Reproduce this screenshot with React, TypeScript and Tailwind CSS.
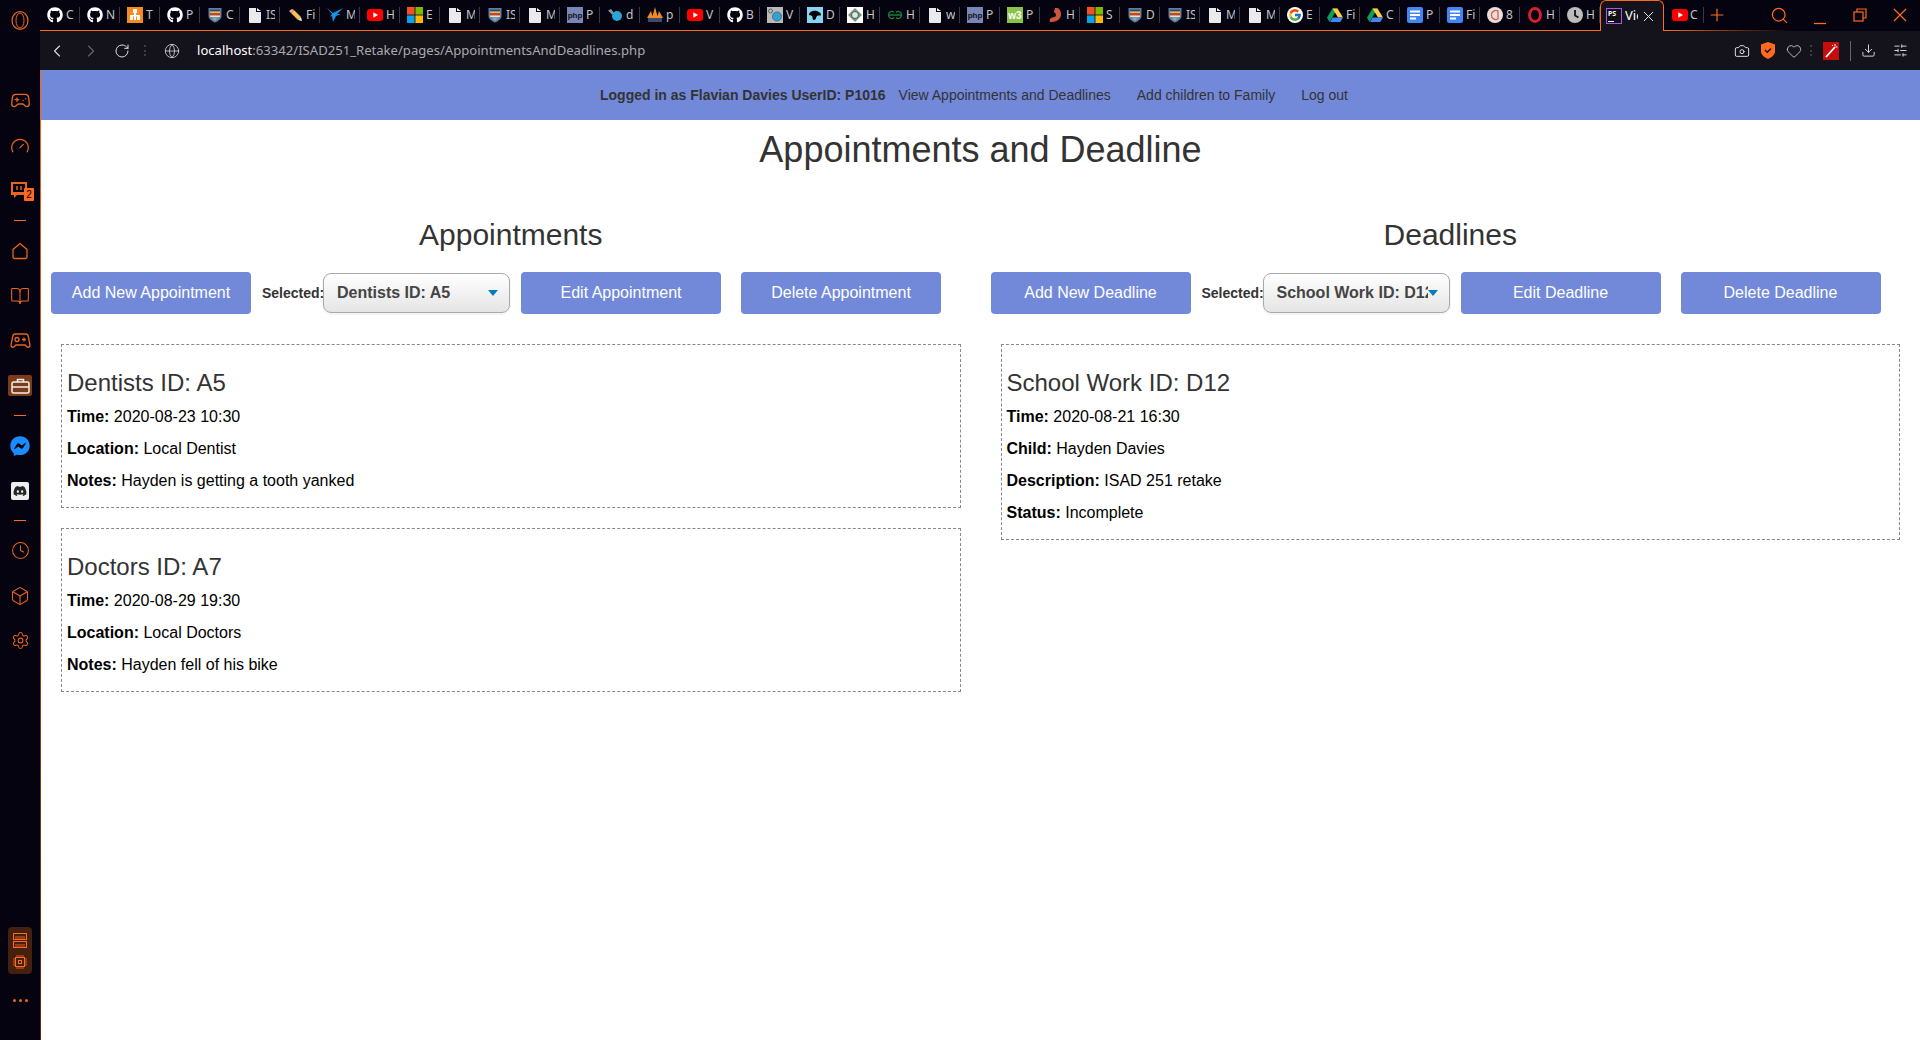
import type { ReactNode } from "react";
import {
  Box,
  BookOpen,
  Camera,
  ChevronLeft,
  ChevronRight,
  Clock,
  Download,
  Gamepad2,
  Gauge,
  Globe,
  Heart,
  Plus,
  RotateCw,
  Search,
  Settings,
  SlidersHorizontal,
  X,
} from "lucide-react";
import { FaDiscord, FaFacebookMessenger, FaGithub } from "react-icons/fa";
import { FcGoogle } from "react-icons/fc";

const Youtube = () => (
  <svg width="16" height="16" viewBox="0 0 16 16">
    <rect x="0" y="2" width="16" height="12" rx="3" fill="#f00" />
    <path d="M6.3 5.3 11 8l-4.7 2.7z" fill="#fff" />
  </svg>
);
const Microsoft = () => (
  <svg width="16" height="16" viewBox="0 0 16 16">
    <rect width="7.6" height="7.6" fill="#f25022" />
    <rect x="8.4" width="7.6" height="7.6" fill="#7fba00" />
    <rect y="8.4" width="7.6" height="7.6" fill="#00a4ef" />
    <rect x="8.4" y="8.4" width="7.6" height="7.6" fill="#ffb900" />
  </svg>
);
const Doc = () => (
  <svg width="16" height="16" viewBox="0 0 16 16">
    <path d="M2 1h7v4h5v10a1 1 0 0 1-1 1H3a1 1 0 0 1-1-1zM10 1l4 3h-4z" fill="#e8eaed" />
  </svg>
);
const Crest = () => (
  <svg width="16" height="16" viewBox="0 0 16 16">
    <path d="M1.500 1h13v8c0 3-3 5-6.500 6.500C4.500 14 1.500 12 1.500 9z" fill="#5f7fa6" />
    <rect x="3" y="2.500" width="10" height="2" fill="#2f4a75" />
    <rect x="3" y="4.500" width="10" height="1.500" fill="#e8c04a" />
    <rect x="3" y="6" width="10" height="2.500" fill="#c8402f" />
    <rect x="3" y="8.500" width="10" height="1.500" fill="#f1e3b0" />
    <path d="M4.500 10.500h7L8 14z" fill="#8ea5c2" />
  </svg>
);
const Php = () => (
  <svg width="16" height="16" viewBox="0 0 16 16">
    <rect width="16" height="16" fill="#7a86b8" />
    <text x="8" y="11" textAnchor="middle" fontSize="8" fontWeight="700" fill="#111" fontFamily="Liberation Sans">
      php
    </text>
  </svg>
);
const GDrive = () => (
  <svg width="16" height="16" viewBox="0 0 16 16">
    <path d="M5.500 1.500h5L5 11 2.500 15 0 10.500z" fill="#0f9d58" />
    <path d="M5.500 1.500h5l5.500 9h-5z" fill="#ffcd40" />
    <path d="M3 15l2.600-4.500H16L13.300 15z" fill="#4285f4" />
  </svg>
);
const GDocs = () => (
  <svg width="16" height="16" viewBox="0 0 16 16">
    <rect width="16" height="16" rx="2" fill="#4285f4" />
    <rect x="3" y="3.500" width="10" height="2" fill="#fff" />
    <rect x="3" y="7" width="10" height="2" fill="#fff" />
    <rect x="3" y="10.500" width="6" height="2" fill="#fff" />
  </svg>
);

const favicons: Record<string, ReactNode> = {
  github: <FaGithub size={16} color="#fff" />,
  tree: (
    <svg width="16" height="16" viewBox="0 0 16 16">
      <rect width="16" height="16" fill="#f58a1f" />
      <path d="M6 2h4v4H9v2h4v5h-3V9.500H9V13H7V9.500H6V13H3V8h4V6H6z" fill="#fff" />
    </svg>
  ),
  crest: <Crest />,
  doc: <Doc />,
  pencil: (
    <svg width="16" height="16" viewBox="0 0 16 16">
      <path d="M4 6l3-3 7 7-3 3z" fill="#f2c14e" />
      <path d="M4 6l3-3-2-1-3 2z" fill="#f2a6b0" />
      <path d="M11 13l3-3 1 4z" fill="#eee" />
    </svg>
  ),
  bird: (
    <svg width="16" height="16" viewBox="0 0 16 16">
      <path d="M0 1l6 5 10-5-6 6h4l-5 2-3 6-1-6-2 1 2-3z" fill="#1793e6" />
    </svg>
  ),
  youtube: <Youtube />,
  microsoft: <Microsoft />,
  php: <Php />,
  dot: (
    <svg width="16" height="16" viewBox="0 0 16 16">
      <circle cx="10" cy="9" r="5" fill="#2aa5d8" />
      <path d="M1 3.500l3-1.500 3 4-2 1.500z" fill="#7f98a3" />
    </svg>
  ),
  pascal: (
    <svg width="16" height="16" viewBox="0 0 16 16">
      <path d="M0 11 4 4l2 7zM5 11 8 0l3 11zM10 11l2-7 4 7z" fill="#f08a24" />
      <rect x="1" y="11" width="14" height="4" fill="#3d4a70" />
    </svg>
  ),
  lens: (
    <svg width="16" height="16" viewBox="0 0 16 16">
      <rect width="16" height="16" fill="#b9b9b9" />
      <circle cx="10" cy="9.500" r="4.500" fill="#2aa5d8" stroke="#567" />
      <circle cx="3.500" cy="4" r="2" fill="none" stroke="#567" />
    </svg>
  ),
  blob: (
    <svg width="16" height="16" viewBox="0 0 16 16">
      <rect width="16" height="16" fill="#87d3f2" />
      <path d="M2 7c1-3 5-4 8-3s4 3 4 4-3 0-4 1-1 4-3 4-1-3-2-4-3 0-3-2z" fill="#000" />
    </svg>
  ),
  diamond: (
    <svg width="16" height="16" viewBox="0 0 16 16">
      <rect width="16" height="16" fill="#fff" />
      <path d="M8 1l7 7-7 7-7-7z" fill="#7d8f84" />
      <circle cx="8" cy="8" r="3.500" fill="#dfe8e2" stroke="#2d6a4f" />
    </svg>
  ),
  gfg: (
    <svg width="16" height="16" viewBox="0 0 16 16">
      <path d="M8 8H1.500a3.200 3.200 0 0 1 5.500-2.500M8 8h6.500A3.200 3.200 0 0 0 9 5.500M1.500 8a3.200 3.200 0 0 0 5.500 2.500M14.500 8A3.200 3.200 0 0 1 9 10.500" fill="none" stroke="#1b7d3c" strokeWidth="1.300" />
    </svg>
  ),
  w3: (
    <svg width="16" height="16" viewBox="0 0 16 16">
      <rect width="16" height="16" fill="#8bc34a" />
      <text x="8" y="11.500" textAnchor="middle" fontSize="10" fontWeight="700" fill="#fff" fontFamily="Liberation Sans">
        w3
      </text>
    </svg>
  ),
  stomach: (
    <svg width="16" height="16" viewBox="0 0 16 16">
      <path d="M8 1h3c3 2 4 7 2 10s-6 4.500-10 4c-1-2 0-4 2-4.500s4-.5 4-2.500-2-2-2-3.500S8 2.500 8 1z" fill="#c9573f" />
    </svg>
  ),
  google: (
    <span className="flex h-4 w-4 items-center justify-center rounded-full bg-white">
      <FcGoogle size={14} />
    </span>
  ),
  drive: <GDrive />,
  docs: <GDocs />,
  circle: (
    <svg width="16" height="16" viewBox="0 0 16 16">
      <circle cx="8" cy="8" r="8" fill="#e6e0dc" />
      <path d="M11 12a4.500 4.500 0 1 1 0-8v8" fill="none" stroke="#e2574c" strokeWidth="1.300" />
    </svg>
  ),
  opera: (
    <svg width="16" height="16" viewBox="0 0 16 16">
      <ellipse cx="8" cy="8" rx="5.500" ry="6.500" fill="none" stroke="#d3202f" strokeWidth="3" />
    </svg>
  ),
  clock: (
    <svg width="16" height="16" viewBox="0 0 16 16">
      <circle cx="8" cy="8" r="8" fill="#bdbdbd" />
      <path d="M8 3v5.500l3.500 2" fill="none" stroke="#111" strokeWidth="1.800" />
    </svg>
  ),
};

const tabs: [string, string][] = [
  ["github", "C"], ["github", "N"], ["tree", "T"], ["github", "P"], ["crest", "C"],
  ["doc", "IS"], ["pencil", "Fi"], ["bird", "M"], ["youtube", "H"], ["microsoft", "E"],
  ["doc", "M"], ["crest", "IS"], ["doc", "M"], ["php", "P"], ["dot", "d"],
  ["pascal", "p"], ["youtube", "V"], ["github", "B"], ["lens", "V"], ["blob", "D"],
  ["diamond", "H"], ["gfg", "H"], ["doc", "w"], ["php", "P"], ["w3", "P"],
  ["stomach", "H"], ["microsoft", "S"], ["crest", "D"], ["crest", "IS"], ["doc", "M"],
  ["doc", "M"], ["google", "E"], ["drive", "Fi"], ["drive", "C"], ["docs", "P"],
  ["docs", "Fi"], ["circle", "8"], ["opera", "H"], ["clock", "H"],
];

function Tab({ icon, label }: { icon: string; label: string }) {
  return (
    <div className="flex h-[30px] w-10 shrink-0 items-center pl-[7px]">
      <span className="flex h-4 w-4 shrink-0 items-center justify-center">{favicons[icon]}</span>
      <span className="ml-[3px] w-[9px] overflow-hidden text-[12px] text-[#c4c4c4]">{label}</span>
      <span className="ml-auto h-4 w-px shrink-0 bg-[#3a3a42]" />
    </div>
  );
}

function TabStrip() {
  return (
    <div className="flex h-[31px] shrink-0">
      <div className="flex border-b border-[#ff6a1f]">
        {tabs.map(([icon, label], i) => (
          <Tab key={i} icon={icon} label={label} />
        ))}
      </div>
      <div className="flex h-[31px] w-16 shrink-0 items-center rounded-t-[6px] border-x border-t border-[#ff6a1f] bg-[#14131c] pl-[5px]">
        <span className="flex h-4 w-4 shrink-0 flex-col justify-between border border-[#a855f7] bg-[#111] px-px py-px">
          <span className="text-[7px] leading-[7px] font-bold text-white">PS</span>
          <span className="h-px w-[6px] bg-white" />
        </span>
        <span className="ml-[3px] w-[13px] overflow-hidden text-[13px] text-white">Vie</span>
        <X size={17} color="#e8e8e8" className="ml-[2px]" strokeWidth={1.4} />
      </div>
      <div className="flex flex-1 flex-col">
        <div className="flex h-[30px] items-center">
          <div className="flex h-[30px] w-10 items-center pl-2">
            <Youtube />
            <span className="ml-[2px] w-[8px] overflow-hidden text-[12px] text-[#c4c4c4]">C</span>
            <span className="ml-auto h-4 w-px bg-[#3a3a42]" />
          </div>
          <Plus size={20} color="#ff6a1f" className="ml-[3px]" strokeWidth={1.4} />
          <Search size={19} color="#ff6a1f" className="ml-[43px]" strokeWidth={1.5} />
          <svg width="14" height="14" viewBox="0 0 14 14" className="ml-[24px] mt-[5px]" fill="none" stroke="#ff6a1f" strokeWidth="1.300">
            <path d="M1 12.500h12" />
          </svg>
          <svg width="14" height="14" viewBox="0 0 14 14" className="ml-[26px]" fill="none" stroke="#ff6a1f" strokeWidth="1.200">
            <rect x="1" y="4" width="9" height="9" />
            <path d="M4 4V1h9v9h-3" />
          </svg>
          <svg width="14" height="14" viewBox="0 0 14 14" className="ml-[26px]" fill="none" stroke="#ff6a1f" strokeWidth="1.200">
            <path d="M1 1l12 12M13 1 1 13" />
          </svg>
        </div>
        <div className="h-px bg-gradient-to-r from-[#ff6a1f] to-transparent to-50%" />
      </div>
    </div>
  );
}

function DotsV() {
  return (
    <span className="flex h-[11px] w-[2px] shrink-0 flex-col justify-between">
      <span className="h-[2px] w-[2px] bg-[#3c3c44]" />
      <span className="h-[2px] w-[2px] bg-[#3c3c44]" />
      <span className="h-[2px] w-[2px] bg-[#3c3c44]" />
    </span>
  );
}

function Toolbar() {
  return (
    <div className="flex h-[39px] shrink-0 items-center bg-[#14131c] text-[#ddd]">
      <ChevronLeft size={20} strokeWidth={1.3} className="ml-[7px]" />
      <ChevronRight size={20} strokeWidth={1.3} className="ml-[14px] text-[#666]" />
      <RotateCw size={16} strokeWidth={1.5} className="ml-[13px]" />
      <span className="ml-[14px]">
        <DotsV />
      </span>
      <Globe size={16} strokeWidth={1.2} className="ml-[18px]" />
      <div className="ml-[17px] font-['Noto_Sans',sans-serif] text-[13.1px] whitespace-nowrap text-[#a9a9ae]">
        <span className="text-white">localhost</span>:63342/ISAD251_Retake/pages/AppointmentsAndDeadlines.php
      </div>
      <div className="ml-auto flex items-center pr-[12px]">
        <Camera size={16} strokeWidth={1.5} />
        <svg width="14" height="17" viewBox="0 0 14 17" className="ml-[11px]">
          <path d="M7 0l7 2.500v7c0 3-3 6-7 7.500-4-1.500-7-4.500-7-7.500v-7z" fill="#ff6a1f" />
          <path d="M4 8l2.300 2.300L10 6.500" fill="none" stroke="#14131c" strokeWidth="1.500" />
        </svg>
        <Heart size={16} strokeWidth={1.2} className="ml-[11px]" />
        <span className="ml-[8px]">
          <DotsV />
        </span>
        <svg width="16" height="18" viewBox="0 0 16 18" className="ml-[11px]">
          <rect width="16" height="18" fill="#c40d0d" />
          <path d="M3 15 12 5" stroke="#fff" strokeWidth="1.800" />
          <path d="M12 2v2M14.500 5h-2M9 3l1 1" stroke="#fff" strokeWidth="1" />
        </svg>
        <span className="ml-[11px] h-5 w-px bg-[#666]" />
        <Download size={15} strokeWidth={1.5} className="ml-[10px]" />
        <SlidersHorizontal size={15} strokeWidth={1.5} className="ml-[17px]" />
      </div>
    </div>
  );
}

function SideIcon({ children }: { children: ReactNode }) {
  return <div className="flex h-[45px] shrink-0 items-center justify-center text-[#e8641f]">{children}</div>;
}

function SideDivider() {
  return (
    <div className="flex h-[15px] shrink-0 items-center justify-center">
      <span className="h-px w-3 bg-[#ff6a1f]" />
    </div>
  );
}

function Sidebar() {
  return (
    <aside className="flex h-full w-10 shrink-0 flex-col bg-[#05030f]">
      <div className="flex h-[78px] shrink-0 justify-center pt-[11px]">
        <svg width="18" height="19" viewBox="0 0 18 19">
          <ellipse cx="9" cy="9.500" rx="8" ry="8.800" fill="none" stroke="#e8641f" strokeWidth="1.200" />
          <ellipse cx="9" cy="9.500" rx="4" ry="7.500" fill="none" stroke="#e8641f" strokeWidth="1" />
        </svg>
      </div>
      <SideIcon>
        <Gamepad2 size={21} strokeWidth={1.5} />
      </SideIcon>
      <SideIcon>
        <Gauge size={20} strokeWidth={1.5} />
      </SideIcon>
      <SideIcon>
        <div className="relative h-5 w-5">
          <svg width="18" height="18" viewBox="0 0 18 18">
            <path d="M1 1h16v10l-3 3H7l-3 3v-3H1z" fill="#e8641f" />
            <rect x="3" y="3" width="12" height="8" fill="#05030f" />
            <path d="M7 5v4M11 5v4" stroke="#e8641f" strokeWidth="1.500" />
          </svg>
          <span className="absolute top-[7px] left-[14px] flex h-[13px] w-[10px] items-center justify-center rounded-[1px] bg-[#ff6a1f] font-['Liberation_Sans',sans-serif] text-[10px] text-black">2</span>
        </div>
      </SideIcon>
      <SideDivider />
      <SideIcon>
        <svg width="18" height="18" viewBox="0 0 18 18" fill="none" stroke="#e8641f" strokeWidth="1.300">
          <path d="M9 1.500 16 7.500V15a1.500 1.500 0 0 1-1.500 1.500h-11A1.500 1.500 0 0 1 2 15V7.500z" strokeLinejoin="round" />
        </svg>
      </SideIcon>
      <SideIcon>
        <BookOpen size={20} strokeWidth={1.3} />
      </SideIcon>
      <SideIcon>
        <svg width="21" height="16" viewBox="0 0 21 16" fill="none" stroke="#e8641f" strokeWidth="1.300">
          <path d="M5 1h11c1.500 0 2 1 2.300 2.500L20 12c.3 2-2 3-3.300 1.500L15 12H6l-1.700 1.500C3 15 .7 14 1 12l1.700-8.500C3 2 3.500 1 5 1z" />
          <circle cx="7" cy="6.500" r="2" />
          <path d="M12 6.500h4M14 4.500v4" />
        </svg>
      </SideIcon>
      <SideIcon>
        <div className="flex h-[21px] w-6 items-center justify-center rounded-[2px] bg-[#7a3a1c] text-white">
          <svg width="19" height="16" viewBox="0 0 19 16" fill="none" stroke="#f5efe9" strokeWidth="1.500">
            <rect x="1" y="4" width="17" height="11" rx="1.500" />
            <path d="M6.500 4V1.500h6V4M1 9h17" />
          </svg>
        </div>
      </SideIcon>
      <SideDivider />
      <SideIcon>
        <FaFacebookMessenger size={20} color="#1a8cff" />
      </SideIcon>
      <SideIcon>
        <div className="flex h-[18px] w-[18px] items-center justify-center rounded-[2px] bg-[#eee]">
          <FaDiscord size={14} color="#23272a" />
        </div>
      </SideIcon>
      <SideDivider />
      <SideIcon>
        <Clock size={19} strokeWidth={1.3} />
      </SideIcon>
      <SideIcon>
        <Box size={20} strokeWidth={1.3} />
      </SideIcon>
      <SideIcon>
        <Settings size={19} strokeWidth={1.3} />
      </SideIcon>
      <div className="mt-auto flex flex-col items-center">
        <div className="flex h-[47px] w-6 flex-col items-center justify-center gap-[7px] rounded-[4px] bg-[#45200f]">
          <svg width="14" height="15" viewBox="0 0 14 15" fill="none" stroke="#ff6a1f">
            <rect x=".5" y=".5" width="13" height="6" />
            <rect x=".5" y="8.500" width="13" height="6" />
            <path d="M3 3v3M5 3v3M7 3v3M9 3v3M11 3v3M3 11v3M5 11v3M7 11v3M9 11v3M11 11v3" strokeWidth=".8" />
          </svg>
          <svg width="14" height="14" viewBox="0 0 14 14" fill="none" stroke="#ff6a1f">
            <rect x="2.500" y="2.500" width="9" height="9" />
            <rect x="5.500" y="5.500" width="3" height="3" />
            <path d="M4 0v2M6 0v2M8 0v2M10 0v2M4 12v2M6 12v2M8 12v2M10 12v2M0 4h2M0 6h2M0 8h2M0 10h2M12 4h2M12 6h2M12 8h2M12 10h2" strokeWidth=".8" />
          </svg>
        </div>
        <div className="mt-[25px] mb-[38px] flex gap-[3px]">
          <span className="h-[3px] w-[3px] rounded-full bg-[#e8641f]" />
          <span className="h-[3px] w-[3px] rounded-full bg-[#e8641f]" />
          <span className="h-[3px] w-[3px] rounded-full bg-[#e8641f]" />
        </div>
      </div>
    </aside>
  );
}

function ActionButton({ label, className }: { label: string; className: string }) {
  return (
    <button className={`h-[42px] w-[200px] shrink-0 rounded-[4px] bg-[#7289da] text-[16px] text-white ${className}`}>
      {label}
    </button>
  );
}

function FakeSelect({ value }: { value: string }) {
  return (
    <div className="flex h-10 w-[187px] shrink-0 items-center rounded-lg border border-[#aaa] bg-gradient-to-b from-white to-[#e5e5e5] pl-[13px] shadow-[0_1px_0_1px_rgba(0,0,0,0.04)]">
      <span className="w-[151px] shrink-0 overflow-hidden text-[16px] font-bold whitespace-nowrap text-[#444]">{value}</span>
      <span className="h-0 w-0 border-x-[5px] border-t-[6px] border-x-transparent border-t-[#007eb9]" />
    </div>
  );
}

function Field({ name, value }: { name: string; value: string }) {
  return (
    <p className="mb-[10px] text-[16px] leading-[22px] text-black">
      <b>{name}:</b> {value}
    </p>
  );
}

function Card({ title, rows }: { title: string; rows: [string, string][] }) {
  return (
    <div className="mx-5 mb-5 border border-dashed border-[#888] p-[5px]">
      <h3 className="mt-5 mb-[10px] text-[24px] leading-[26px] text-[#333]">{title}</h3>
      {rows.map(([name, value]) => (
        <Field key={name} name={name} value={value} />
      ))}
    </div>
  );
}

function Column({
  heading,
  noun,
  selected,
  children,
}: {
  heading: string;
  noun: string;
  selected: string;
  children: ReactNode;
}) {
  return (
    <section className="min-w-0 flex-1">
      <h2 className="text-center text-[30px] leading-[33px] text-[#333]">{heading}</h2>
      <div className="mt-[21px] mb-[30px] flex items-center">
        <ActionButton label={`Add New ${noun}`} className="ml-[10px]" />
        <span className="ml-[11px] w-[61px] shrink-0 text-[14px] font-bold whitespace-nowrap text-[#333]">Selected:</span>
        <FakeSelect value={selected} />
        <ActionButton label={`Edit ${noun}`} className="ml-[11px]" />
        <ActionButton label={`Delete ${noun}`} className="ml-[20px]" />
      </div>
      {children}
    </section>
  );
}

export default function App() {
  return (
    <div className="flex h-[1040px] w-[1920px] overflow-hidden bg-white font-['Liberation_Sans',Arial,sans-serif]">
      <Sidebar />
      <div className="flex min-w-0 flex-1 flex-col">
        <div className="bg-[#05030f] font-['Noto_Sans',sans-serif]">
          <TabStrip />
        </div>
        <div className="flex min-h-0 flex-1">
          <div className="w-px shrink-0 bg-gradient-to-b from-[#ff6a1f] to-[#5a2a10]" />
          <div className="flex min-w-0 flex-1 flex-col">
            <div className="-ml-px">
              <Toolbar />
            </div>
            <nav className="flex h-[50px] shrink-0 items-center justify-center bg-[#7289da] text-[14px] text-[#333]">
              <b>Logged in as Flavian Davies UserID: P1016</b>
              <a className="px-[13px]">View Appointments and Deadlines</a>
              <a className="px-[13px]">Add children to Family</a>
              <a className="px-[13px]">Log out</a>
            </nav>
            <h1 className="mt-[10px] text-center text-[36px] leading-[40px] text-[#333]">Appointments and Deadline</h1>
            <div className="mt-[48px] flex">
              <Column heading="Appointments" noun="Appointment" selected="Dentists ID: A5">
                <Card
                  title="Dentists ID: A5"
                  rows={[
                    ["Time", "2020-08-23 10:30"],
                    ["Location", "Local Dentist"],
                    ["Notes", "Hayden is getting a tooth yanked"],
                  ]}
                />
                <Card
                  title="Doctors ID: A7"
                  rows={[
                    ["Time", "2020-08-29 19:30"],
                    ["Location", "Local Doctors"],
                    ["Notes", "Hayden fell of his bike"],
                  ]}
                />
              </Column>
              <Column heading="Deadlines" noun="Deadline" selected="School Work ID: D12">
                <Card
                  title="School Work ID: D12"
                  rows={[
                    ["Time", "2020-08-21 16:30"],
                    ["Child", "Hayden Davies"],
                    ["Description", "ISAD 251 retake"],
                    ["Status", "Incomplete"],
                  ]}
                />
              </Column>
            </div>
          </div>
        </div>
      </div>
    </div>
  );
}
